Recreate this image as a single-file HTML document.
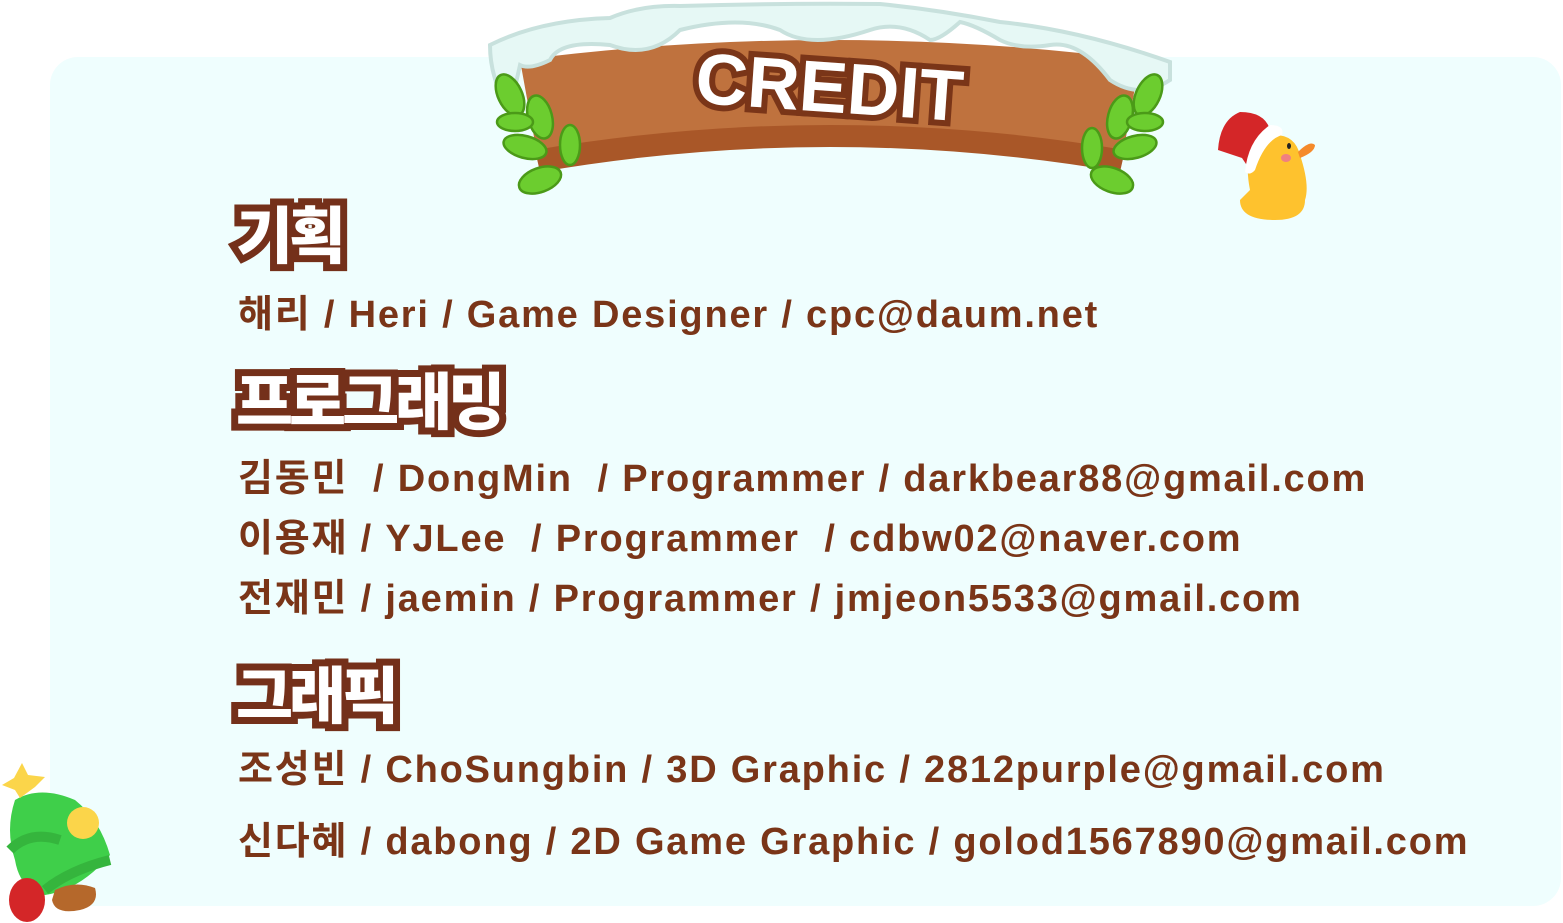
<!DOCTYPE html>
<html><head><meta charset="utf-8"><style>
html,body{margin:0;padding:0;width:1563px;height:923px;background:#fff;overflow:hidden;position:relative;font-family:"Liberation Sans","Noto Sans CJK KR",sans-serif;}
.card{position:absolute;left:50px;top:57px;width:1511px;height:849px;background:#effefe;border-radius:28px;}
.h{position:absolute;left:236px;font-family:"Noto Sans CJK KR",sans-serif;font-weight:900;font-size:62px;color:#fff;-webkit-text-stroke:14px #74301a;paint-order:stroke fill;letter-spacing:-4px;line-height:1;}
.t{position:absolute;left:238px;font-family:"Liberation Sans","Noto Sans CJK KR",sans-serif;font-weight:bold;font-size:38px;letter-spacing:1.8px;color:#7a3518;white-space:pre;line-height:1;}
</style></head><body>
<div class="card"></div>
<svg style="position:absolute;left:480px;top:0" width="700" height="200" viewBox="0 0 700 200">
 <path d="M40 60 Q350 20 660 60 L640 170 Q350 110 60 170 Z" fill="#bf723e"/>
 <path d="M55 150 Q350 100 645 150 L640 172 Q350 122 60 172 Z" fill="#a95728"/>
 <path d="M10 45 Q60 20 130 18 Q160 5 200 6 Q300 3 400 4 Q460 10 520 22 Q600 30 690 62 L690 80 Q660 100 630 80 Q600 40 570 45 Q540 50 520 40 Q495 25 480 22 Q460 40 450 40 Q420 20 390 30 Q330 50 300 30 Q260 15 200 30 Q170 60 130 45 Q80 40 70 60 Q50 70 40 65 L30 110 Q10 80 10 45 Z" fill="#e6f8f5" stroke="#c8e1dd" stroke-width="4"/>
 <text x="350" y="112" text-anchor="middle" font-family="Liberation Sans,sans-serif" font-weight="bold" font-size="72" fill="#fff" stroke="#7a3518" stroke-width="12" paint-order="stroke" transform="rotate(4 350 80)">CREDIT</text>
 <g fill="#6ccd2f" stroke="#4b9a18" stroke-width="2.5">
  <ellipse cx="30" cy="95" rx="12" ry="22" transform="rotate(-25 30 95)"/>
  <ellipse cx="60" cy="117" rx="12" ry="22" transform="rotate(-15 60 117)"/>
  <ellipse cx="35" cy="122" rx="18" ry="9"/>
  <ellipse cx="45" cy="147" rx="22" ry="11" transform="rotate(15 45 147)"/>
  <ellipse cx="90" cy="145" rx="10" ry="20"/>
  <ellipse cx="60" cy="180" rx="22" ry="12" transform="rotate(-20 60 180)"/>
  <ellipse cx="668" cy="95" rx="12" ry="22" transform="rotate(25 668 95)"/>
  <ellipse cx="640" cy="117" rx="12" ry="22" transform="rotate(15 640 117)"/>
  <ellipse cx="665" cy="122" rx="18" ry="9"/>
  <ellipse cx="655" cy="147" rx="22" ry="11" transform="rotate(-15 655 147)"/>
  <ellipse cx="612" cy="148" rx="10" ry="20"/>
  <ellipse cx="632" cy="180" rx="22" ry="12" transform="rotate(20 632 180)"/>
 </g>
</svg>
<svg style="position:absolute;left:1200px;top:100px" width="130" height="130" viewBox="0 0 130 130">
 <path d="M50 90 Q40 40 75 35 Q95 35 100 55 Q110 85 105 100 Q105 120 75 120 Q40 120 40 100 Z" fill="#fec22e"/>
 <path d="M18 50 Q20 20 40 12 Q65 12 70 30 L50 70 L42 58 Z" fill="#d42628"/>
 <path d="M70 25 Q85 25 82 35 Q65 40 55 70 Q50 76 45 72 Q48 40 70 25 Z" fill="#fff"/>
 <path d="M98 52 Q110 40 115 45 Q115 52 100 58 Z" fill="#f58a2b"/>
 <ellipse cx="89" cy="46" rx="2" ry="3" fill="#222"/>
 <ellipse cx="86" cy="58" rx="5" ry="4" fill="#f08080"/>
</svg>
<svg style="position:absolute;left:0;top:760px" width="130" height="163" viewBox="0 0 130 163">
 <path d="M15 40 Q40 25 75 40 Q100 60 110 95 Q80 130 45 135 Q20 130 15 100 Q5 70 15 40 Z" fill="#3fcf4a"/>
 <path d="M10 90 Q30 70 60 80 M45 130 Q70 110 110 100" stroke="#35b53d" stroke-width="10" fill="none"/>
 <path d="M55 130 Q75 120 95 128 Q100 145 80 150 Q55 155 52 140 Z" fill="#b5682b"/>
 <ellipse cx="27" cy="140" rx="18" ry="22" fill="#d42628"/>
 <circle cx="83" cy="63" r="16" fill="#fbd54a"/>
 <path d="M22 3 L28 15 L45 17 L35 27 L20 38 L15 30 L2 25 L14 18 Z" fill="#fbd54a"/>
</svg>
<div class="h" style="top:200px">기획</div>
<div class="t" style="top:296px">해리 / Heri / Game Designer / cpc@daum.net</div>
<div class="h" style="top:366px">프로그래밍</div>
<div class="t" style="top:460px">김동민  / DongMin  / Programmer / darkbear88@gmail.com</div>
<div class="t" style="top:520px">이용재 / YJLee  / Programmer  / cdbw02@naver.com</div>
<div class="t" style="top:580px">전재민 / jaemin / Programmer / jmjeon5533@gmail.com</div>
<div class="h" style="top:660px">그래픽</div>
<div class="t" style="top:751px">조성빈 / ChoSungbin / 3D Graphic / 2812purple@gmail.com</div>
<div class="t" style="top:823px">신다혜 / dabong / 2D Game Graphic / golod1567890@gmail.com</div>
</body></html>
